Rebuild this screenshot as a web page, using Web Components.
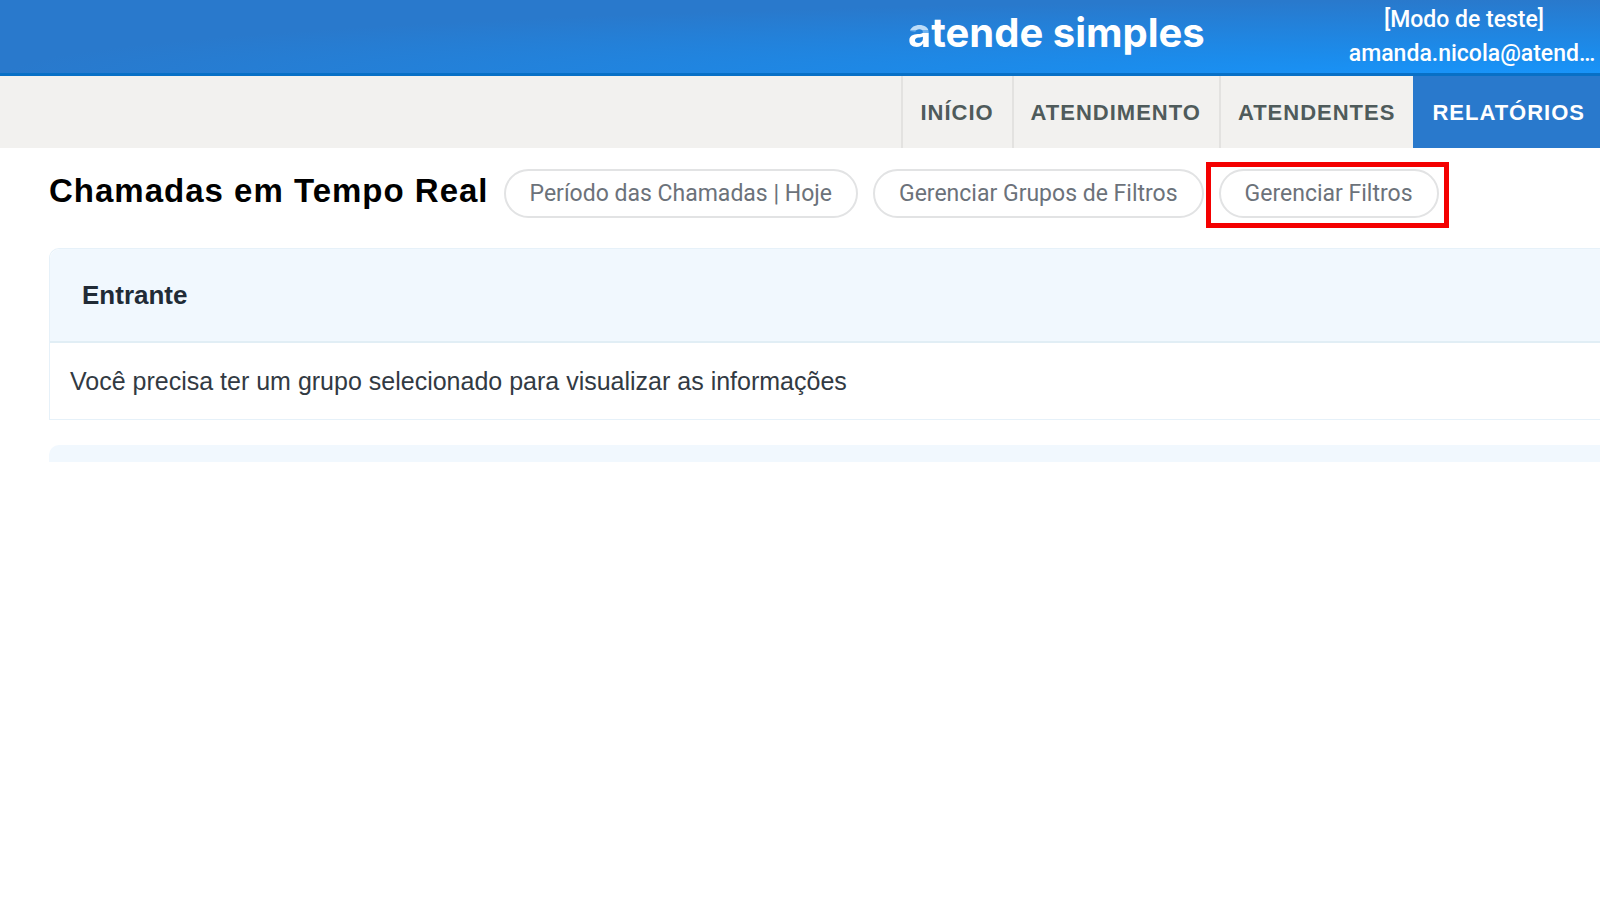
<!DOCTYPE html>
<html lang="pt-BR">
<head>
<meta charset="utf-8">
<title>Chamadas em Tempo Real</title>
<style>
  body { margin: 0; background: #fff; font-family: "Liberation Sans", Arial, sans-serif; overflow-x: hidden; }
</style>
</head>
<body>
<app-header>
  <span slot="mode">[Modo de teste]</span>
  <span slot="user">amanda.nicola@atend…</span>
</app-header>
<app-nav>
  <nav-item>INÍCIO</nav-item>
  <nav-item>ATENDIMENTO</nav-item>
  <nav-item>ATENDENTES</nav-item>
  <nav-item active>RELATÓRIOS</nav-item>
</app-nav>
<page-content>
  <page-toolbar slot="toolbar">
    <span slot="title">Chamadas em Tempo Real</span>
    <pill-button>Período das Chamadas | Hoje</pill-button>
    <pill-button>Gerenciar Grupos de Filtros</pill-button>
    <pill-button highlighted>Gerenciar Filtros</pill-button>
  </page-toolbar>
  <info-card><span slot="title">Entrante</span>Você precisa ter um grupo selecionado para visualizar as informações</info-card>
  <info-card collapsed></info-card>
</page-content>
<script>
  const define = (name, html) => customElements.define(name, class extends HTMLElement {
    constructor() {
      super();
      this.attachShadow({ mode: 'open' }).innerHTML = html;
    }
  });

  define('app-header', `
    <style>
      :host { display: block; }
      header {
        display: grid; grid-template-columns: 1fr 296px 140px 256px;
        height: 73px; border-bottom: 3px solid #0870c6; color: #fff;
        background: radial-gradient(ellipse 96% 105% at 96% 105%, #1895fb 0%, #1b8cec 30%, #2979cc 100%) #2979cc;
      }
      .logo {
        grid-column: 2; align-self: center; color: #fff; text-decoration: none; white-space: nowrap;
        font: 700 40px/48px Inter, sans-serif; padding-bottom: 8px;
      }
      .first {
        color: transparent; background-clip: text; -webkit-background-clip: text;
        background-image: linear-gradient(#bcdcf8 0 22px, #6db2f0 22px 25px, #fff 25px);
      }
      .user {
        grid-column: 4; display: flex; flex-direction: column; align-items: center;
        font: 500 23px/34px Roboto, sans-serif; white-space: nowrap; padding-top: 3px;
      }
      .mode { padding-right: 16px; }
    </style>
    <header>
      <a class="logo" href="#"><span class="first">a</span>tende simples</a>
      <div class="user"><div class="mode"><slot name="mode"></slot></div><slot name="user"></slot></div>
    </header>`);

  define('app-nav', `
    <style>
      :host { display: block; }
      nav { display: flex; justify-content: flex-end; background: #f2f1ef; }
    </style>
    <nav><slot></slot></nav>`);

  define('nav-item', `
    <style>
      :host { display: block; }
      a {
        display: block; padding: 1px 18px 0 17px; border-left: 2px solid #e3e2e0;
        font-size: 22px; font-weight: 700; line-height: 71px; letter-spacing: 1px;
        color: #4f5b5b; text-decoration: none; white-space: nowrap;
      }
      :host([active]) a { background: #2979cc; border-color: #2979cc; color: #fff; padding-right: 15px; }
    </style>
    <a href="#"><slot></slot></a>`);

  define('page-content', `
    <style>
      :host { display: block; padding: 21px 0 0 49px; }
      main { display: flex; flex-direction: column; gap: 25px; margin-top: 30px; }
    </style>
    <slot name="toolbar"></slot>
    <main><slot></slot></main>`);

  define('page-toolbar', `
    <style>
      :host { display: flex; align-items: center; gap: 15px; }
      h1 { margin: 0; font-size: 33px; line-height: 44px; padding-bottom: 5px; letter-spacing: 1px; color: #000; white-space: nowrap; }
    </style>
    <h1><slot name="title"></slot></h1>
    <slot></slot>`);

  define('pill-button', `
    <style>
      :host { display: block; position: relative; }
      button {
        display: block; height: 49px; padding: 0 24px; border: 2px solid #e2e3e4; border-radius: 25px;
        background: #fff; color: #6c727a; font: 400 23px/45px Roboto, sans-serif; white-space: nowrap;
      }
      :host([highlighted])::after {
        content: ""; position: absolute; inset: -7px -10px -10px -13px;
        border: 5px solid #f40000; pointer-events: none;
      }
    </style>
    <button type="button"><slot></slot></button>`);

  define('info-card', `
    <style>
      :host { display: block; }
      section { border: 1px solid #e6f1f9; border-right: 0; }
      section, h2 { border-top-left-radius: 10px; }
      h2 {
        margin: 0; padding: 0 32px; background: #f1f8fe; border-bottom: 2px solid #e1eef5;
        font-size: 26px; line-height: 92px; color: #212b36;
      }
      p { margin: 0; padding: 0 20px; font-size: 25px; line-height: 76px; color: #323a43; }
      :host([collapsed]) section { border: 0; }
      :host([collapsed]) h2 { height: 17px; border: 0; }
      :host([collapsed]) p { display: none; }
    </style>
    <section>
      <h2><slot name="title"></slot></h2>
      <p><slot></slot></p>
    </section>`);
</script>
</body>
</html>
